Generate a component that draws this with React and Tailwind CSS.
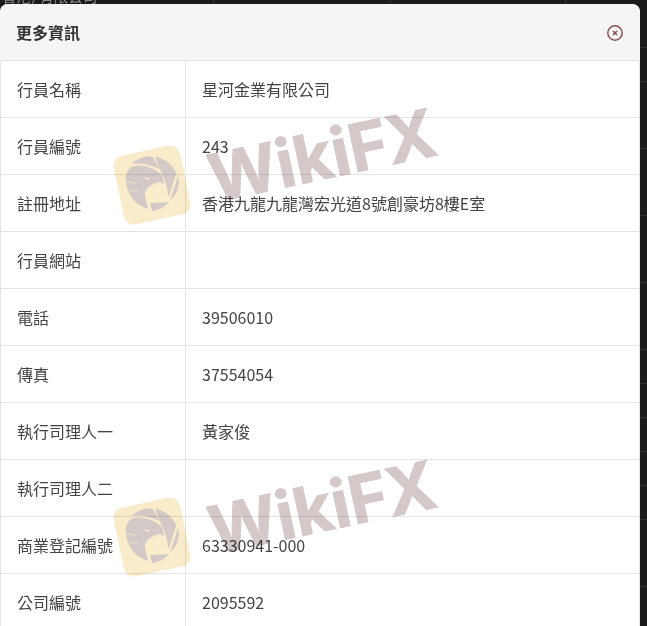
const rows = [
  ["行員名稱", "星河金業有限公司"],
  ["行員編號", "243"],
  ["註冊地址", "香港九龍九龍灣宏光道8號創豪坊8樓E室"],
  ["行員網站", ""],
  ["電話", "39506010"],
  ["傳真", "37554054"],
  ["執行司理人一", "黃家俊"],
  ["執行司理人二", ""],
  ["商業登記編號", "63330941-000"],
  ["公司編號", "2095592"],
];

// faint row lines of the page behind the modal
const backdropRows = [48, 34, 67, 67, 67, 67, 34, 34, 34, 34, 34, 67];

function Eagle() {
  return (
    <svg viewBox="0 0 285 270" className="absolute inset-0 w-[95px] h-[90px]" fill="#d3cac8">
      <path d="M80 72 C95 55 120 48 143 50 L165 88 C135 72 105 68 80 72 Z" />
      <path d="M150 50 C180 55 205 75 214 100 L190 172 C188 150 185 130 172 105 Z" />
      <path d="M219 108 C226 135 218 160 196 180 Z" />
      <path d="M135 190 L192 186 C175 205 155 213 142 213 Z" />
      <path d="M62 112 C65 95 72 82 85 78 C115 72 145 82 165 100 C175 110 178 122 175 135 L170 128 C160 125 150 130 140 135 C128 142 118 155 120 170 C122 182 128 198 130 206 C100 200 75 175 65 140 Z" />
      <path d="M114 112 L134 114 L128 120 Z" fill="#f8eccb" />
      <path d="M64 124 L92 130 M72 152 L96 152" stroke="#f8eccb" strokeWidth="2" fill="none" />
    </svg>
  );
}

function Watermark({ className }) {
  return (
    <div className={`absolute left-[105px] w-[95px] h-[90px] pointer-events-none mix-blend-multiply ${className}`}>
      <div className="absolute left-[13px] top-[10px] w-[68px] h-[70px] rounded-[10px] bg-[#f8eccb] rotate-[-12deg]" />
      <Eagle />
      <span className="absolute left-[102px] top-[-18px] text-[66px] leading-none font-bold [-webkit-text-stroke:1px_#d4c9c8] text-[#d4c9c8] rotate-[-12deg] font-['Inter',sans-serif]">
        WikiFX
      </span>
    </div>
  );
}

export default function App() {
  return (
    <div className="relative h-[626px] overflow-hidden bg-[#1b1b1b] font-['Noto_Sans_CJK_TC',sans-serif]">
      <div className="flex h-1 overflow-hidden text-[14.5px] text-[#8a8a8a]">
        <div className="w-[214px] pl-0.5 border-r border-[#333] leading-[4px]">
          <div className="-mt-[6px]">香港) 有限公司</div>
        </div>
        <div className="w-[177px] border-r border-[#333]" />
        <div className="w-[175px] border-r border-[#333]" />
      </div>
      <div className="absolute right-0 top-0 w-[7px]">
        {backdropRows.map((h, i) => (
          <div key={i} className="border-b border-[#333]" style={{ height: h }} />
        ))}
      </div>
      <div className="relative w-[640px] rounded-t-lg overflow-hidden bg-white">
        <div className="flex items-center justify-between h-14 pl-4 pr-[17px] bg-[#f5f5f5]">
          <h2 className="text-base font-bold text-[#333]">更多資訊</h2>
          <svg viewBox="0 0 16 16" className="w-4 h-4 mt-0.5" fill="none" stroke="#8b4f57">
            <circle cx="8" cy="8" r="7.2" strokeWidth="1.5" />
            <path d="M6 6 L10 10 M10 6 L6 10" strokeWidth="1.6" />
          </svg>
        </div>
        <div>
          {rows.map(([label, value]) => (
            <div key={label} className="flex h-[57px] border-t border-x border-[#e4e4e4] text-base text-[#444]">
              <div className="flex items-center w-[185px] shrink-0 pl-4 border-r border-[#e4e4e4]">{label}</div>
              <div className="flex items-center pl-4">{value}</div>
            </div>
          ))}
        </div>
        <Watermark className="top-[136px]" />
        <Watermark className="top-[488px]" />
      </div>
    </div>
  );
}
